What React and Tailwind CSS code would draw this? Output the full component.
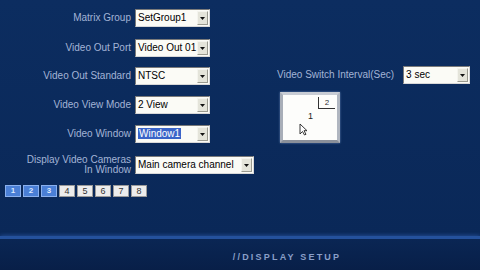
import React from "react";

const font = { fontFamily: '"Liberation Sans", Arial, sans-serif' };

function Select({ w, text, highlight }) {
  return (
    <div
      className={`flex h-[18px] items-center border border-t-[#7a7a7a] border-l-[#7a7a7a] border-b-[#d8d8d8] border-r-[#d8d8d8] bg-[#fbfbf6] ${w}`}
    >
      <div className="flex-1 overflow-hidden whitespace-nowrap pl-[2px] text-[10px] leading-[12px] text-black">
        {highlight ? (
          <span className="bg-[#3a64c8] px-[1px] text-white">{text}</span>
        ) : (
          text
        )}
      </div>
      <div className="mr-[1px] flex h-[14px] w-[11px] items-center justify-center border border-[#f4f4ee] border-b-[#9a9a90] border-r-[#9a9a90] bg-[#e4e4da]">
        <svg width="5" height="3" viewBox="0 0 5 3">
          <path d="M0 0h5L2.5 3z" fill="#111" />
        </svg>
      </div>
    </div>
  );
}

function Row({ label, children, className = "" }) {
  return (
    <div className={`flex items-center ${className}`}>
      <div className="w-[135px] pr-[4px] text-right text-[10px] leading-[10px] text-[#a3b4d6]">
        {label}
      </div>
      {children}
    </div>
  );
}

export default function App() {
  const btns = ["1", "2", "3", "4", "5", "6", "7", "8"];
  return (
    <div
      className="relative flex h-[270px] w-[480px] flex-col overflow-hidden bg-[#0b2b5d]"
      style={font}
    >
      <div className="flex h-[236px] bg-gradient-to-b from-[#0c2d60] to-[#0a2858]">
        <div className="flex w-[277px] flex-col pt-[9px]">
          <Row label="Matrix Group">
            <Select w="w-[75px]" text="SetGroup1" />
          </Row>
          <Row label="Video Out Port" className="mt-[12px]">
            <Select w="w-[75px]" text="Video Out 01" />
          </Row>
          <Row label="Video Out Standard" className="mt-[10px]">
            <Select w="w-[75px]" text="NTSC" />
          </Row>
          <Row label="Video View Mode" className="mt-[11px]">
            <Select w="w-[75px]" text="2 View" />
          </Row>
          <Row label="Video Window" className="mt-[11px]">
            <Select w="w-[75px]" text="Window1" highlight />
          </Row>
          <Row
            label={
              <>
                Display Video Cameras
                <br />
                In Window
              </>
            }
            className="mt-[12px]"
          >
            <Select w="w-[119px]" text="Main camera channel" />
          </Row>
          <div className="mt-[10px] flex gap-[2px] pl-[5px]">
            {btns.map((b, i) =>
              i < 3 ? (
                <div
                  key={b}
                  className="flex h-[12px] w-[16px] items-center justify-center border border-[#8ab0ee] bg-[#4a7fd6] text-[8px] font-bold leading-[8px] text-[#dce8ff]"
                >
                  {b}
                </div>
              ) : (
                <div
                  key={b}
                  className="flex h-[12px] w-[16px] items-center justify-center border border-[#9a9a9a] bg-[#ececec] text-[9px] leading-[9px] text-[#333]"
                >
                  {b}
                </div>
              )
            )}
          </div>
        </div>
        <div className="flex flex-col pt-[66px]">
          <div className="flex items-center">
            <div className="pr-[9px] text-[10px] leading-[10px] text-[#a3b4d6]">
              Video Switch Interval(Sec)
            </div>
            <Select w="w-[67px]" text="3 sec" />
          </div>
          <div className="ml-[3px] mt-[8px] h-[51px] w-[60px] border-[3px] border-t-[#c8ccd4] border-l-[#a8aeb8] border-b-[#8a909a] border-r-[#b0b6c0] bg-[#fdfdfb] shadow-[0_0_2px_#6080b0]">
            <div className="relative h-full w-full">
              <div className="absolute right-[2px] top-[2px] flex h-[12px] w-[17px] items-center justify-center border-l border-b border-[#333] text-[8px] leading-[8px] text-[#333]">
                2
              </div>
              <div className="absolute left-[25px] top-[17px] text-[9px] leading-[9px] text-[#222]">
                1
              </div>
              <svg
                className="absolute left-[16px] top-[28px]"
                width="9"
                height="13"
                viewBox="0 0 9 13"
              >
                <path
                  d="M1 1v10l2.5-2.5L5.5 12l1.5-.7-2-3.6H8z"
                  fill="#fff"
                  stroke="#222"
                  strokeWidth="0.9"
                />
              </svg>
            </div>
          </div>
        </div>
      </div>
      <div className="h-[3px] bg-[#24519c] shadow-[0_0_4px_#2f5eb0]" />
      <div className="flex flex-1 justify-center bg-gradient-to-b from-[#0a2654] to-[#081f48] pl-[94px] pt-[13px]">
        <div className="text-[9px] font-bold leading-[10px] tracking-[2.2px] text-[#8a9fc8]">
          //DISPLAY SETUP
        </div>
      </div>
    </div>
  );
}
